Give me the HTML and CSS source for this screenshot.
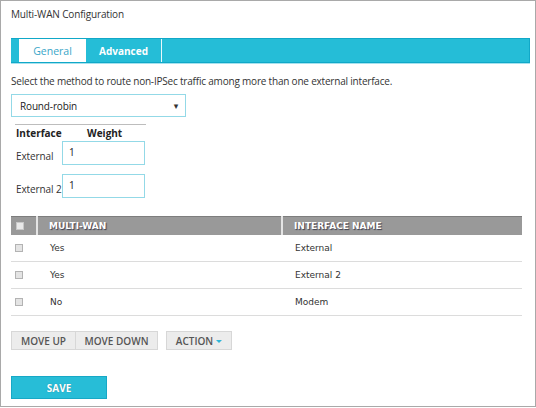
FILE: index.html
```html
<!DOCTYPE html>
<html>
<head>
<meta charset="utf-8">
<link rel="stylesheet" href="styles.css">
</head>
<body>
<div class="panel">
  <div class="title">Multi-WAN Configuration</div>
  <div class="tabs">
    <span class="tab active">General</span>
    <span class="tab">Advanced</span>
  </div>
  <p class="desc">Select the method to route non-IPSec traffic among more than one external interface.</p>
  <div class="select"><span>Round-robin</span><span class="caret">&#9662;</span></div>
  <div class="weights">
    <div class="wt-head"><span class="wt-h1">Interface</span><span>Weight</span></div>
    <div class="wt-row"><span class="wt-label">External</span><div class="input">1</div></div>
    <div class="wt-row"><span class="wt-label">External 2</span><div class="input">1</div></div>
  </div>
  <table class="grid">
    <colgroup><col class="c1"><col class="c2"><col class="c3"></colgroup>
    <thead>
      <tr><th class="cb-cell"><span class="cb"></span></th><th>MULTI-WAN</th><th>INTERFACE NAME</th></tr>
    </thead>
    <tbody>
      <tr><td class="cb-cell"><span class="cb"></span></td><td>Yes</td><td>External</td></tr>
      <tr><td class="cb-cell"><span class="cb"></span></td><td>Yes</td><td>External 2</td></tr>
      <tr><td class="cb-cell"><span class="cb"></span></td><td>No</td><td>Modem</td></tr>
    </tbody>
  </table>
  <div class="btns">
    <div class="group">
      <span class="btn up">MOVE UP</span><span class="btn down">MOVE DOWN</span>
    </div>
    <span class="btn action">ACTION <span class="tri"></span></span>
  </div>
  <div class="save">SAVE</div>
</div>
</body>
</html>
```
FILE: styles.css
```css
* { box-sizing: border-box; }
html, body { margin: 0; padding: 0; background: #fff; }
body { font-family: "Open Sans", "Liberation Sans", sans-serif; color: #333; }
.panel {
  width: 536px;
  height: 407px;
  border: 1px solid #a9a9a9;
  padding: 6px 0 0 10px;
}
.title { font-size: 10px; line-height: 14px; letter-spacing: -0.15px; color: #333; }
.tabs {
  margin-top: 17px;
  width: 519px;
  height: 25px;
  background: #25bdd7;
  border: 1px solid #11a8c8;
  border-left: none;
  box-shadow: 0 1px 0 #a6e2ee;
  display: flex;
  padding-left: 8px;
}
.tab {
  width: 76px;
  display: flex;
  align-items: center;
  justify-content: center;
  font-size: 10px;
  font-weight: 700;
  color: #fff;
  border-right: 1px solid #e9f8fb;
}
.tab.active {
  width: 67px;
  background: #fff;
  color: #3aa6c8;
  font-weight: 400;
  border-right: none;
  font-size: 10.5px;
}
.desc { margin: 11px 0 0; font-size: 10px; line-height: 14px; letter-spacing: -0.2px; }
.select {
  margin-top: 6px;
  width: 175px;
  height: 23px;
  border: 1px solid #93d9e7;
  display: flex;
  align-items: center;
  justify-content: space-between;
  padding: 0 7px 0 8px;
  font-size: 10px;
  letter-spacing: -0.15px;
  color: #222;
}
.caret { font-size: 9px; color: #333; font-family: "DejaVu Sans", sans-serif; }
.weights {
  margin: 7px 0 0 4px;
  width: 131px;
  border-top: 1px solid #bdbdbd;
}
.wt-head { display: flex; height: 16px; align-items: center; font-size: 10px; font-weight: 700; color: #222; padding-left: 1px; }
.wt-h1 { width: 71px; }
.wt-row { display: flex; align-items: flex-start; margin-bottom: 9px; }
.wt-row:last-child { margin-bottom: 0; }
.wt-label { width: 47px; padding: 8px 0 0 1px; font-size: 10px; letter-spacing: -0.1px; color: #333; white-space: nowrap; }
.input {
  width: 83px;
  height: 24px;
  border: 1px solid #93d9e7;
  padding: 3px 0 0 6px;
  font-size: 10px;
  color: #222;
}
.grid {
  margin-top: 18px;
  width: 511px;
  border-collapse: collapse;
  table-layout: fixed;
  font-family: "DejaVu Sans", Verdana, sans-serif;
}
.c1 { width: 26px; }
.c2 { width: 245px; }
.c3 { width: 240px; }
.grid th {
  background: #999;
  border-top: 1px solid #7d7d7d;
  height: 18px;
  padding: 0 0 0 11px;
  text-align: left;
  font-size: 9px;
  font-weight: 700;
  color: #fff;
  text-shadow: 1px 1px 1px #3d3d4d;
  border-left: 2px solid #e4e4e4;
}
.grid th:first-child { border-left: none; }
.grid td {
  height: 27px;
  border-bottom: 1px solid #dcdcdc;
  padding: 0 0 0 13px;
  font-size: 9px;
  color: #333;
}
.grid .cb-cell { padding: 0 0 0 4px; }
.grid th.cb-cell { padding-left: 5px; }
.cb {
  display: block;
  width: 8px;
  height: 8px;
  border: 1px solid #b3b3b3;
  background: #e4e4e4;
}
th .cb { border-color: #c8c8c8; background: #e9e9e9; }
.btns { margin-top: 15px; display: flex; gap: 8px; }
.group { display: flex; }
.btn {
  height: 19px;
  display: flex;
  align-items: center;
  justify-content: center;
  background: #ececec;
  border: 1px solid #d7d7d7;
  font-size: 10px;
  font-weight: 600;
  color: #555;
}
.up { width: 65px; }
.down { width: 82px; border-left: none; }
.action { width: 66px; gap: 3px; }
.tri {
  width: 0; height: 0;
  border-left: 3px solid transparent;
  border-right: 3px solid transparent;
  border-top: 3px solid #2fb5d8;
  margin-top: 2px;
}
.save {
  margin-top: 26px;
  width: 96px;
  height: 23px;
  background: #27bdd7;
  border: 1px solid #17a8c6;
  color: #fff;
  font-size: 10px;
  font-weight: 700;
  display: flex;
  align-items: center;
  justify-content: center;
  text-shadow: 0 0 1px #1a7f93;
}
```
